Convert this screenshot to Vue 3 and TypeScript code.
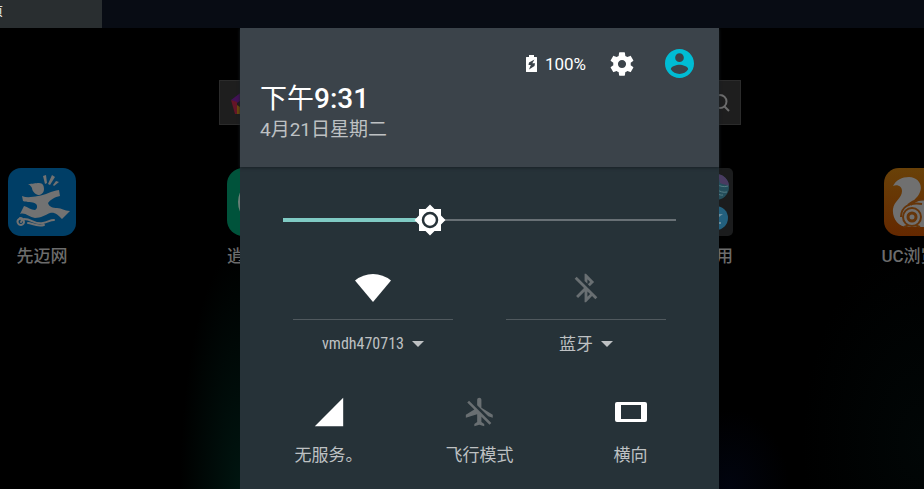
<script setup lang="ts">
import { computed, ref } from 'vue'

interface App {
  id: string
  name: string
}

const apps: App[] = [
  { id: 'xianmai', name: '先迈网' },
  { id: 'market', name: '逍遥市场' },
  { id: 'blank', name: '' },
  { id: 'folder', name: '系统应用' },
  { id: 'uc', name: 'UC浏览器' },
]

const brightness = ref(375)
const level = computed(() => `${brightness.value / 10}%`)
</script>

<template>
  <div class="window">
    <nav class="tabs"><a class="tab" href="#"><span>首页</span></a></nav>

    <main class="screen">
      <div class="device">
        <div class="search">
          <svg class="logo" viewBox="0 0 24 24" aria-hidden="true">
            <path d="M0 9 12 0v8L6 12z" fill="#421156" />
            <path d="m12 0 12 9-6 3-6-4z" fill="#173d66" />
            <path d="m0 9 6 2v12H4z" fill="#641527" />
            <path d="m6 14 6 4v5H6z" fill="#6b4a0c" />
            <path d="M24 9 20 23h-8v-5l6-6z" fill="#14533a" />
          </svg>
          <svg class="glass" viewBox="0 0 20 20" aria-hidden="true">
            <circle cx="9" cy="8.500" r="6.500" />
            <path d="m13.500 13.500 4.500 4.500" />
          </svg>
        </div>

        <div class="apps">
          <a v-for="app in apps" :key="app.id" class="app" href="#">
            <svg v-if="app.id === 'xianmai'" class="app-icon" viewBox="0 0 68 68" aria-hidden="true">
              <rect width="68" height="68" rx="13" fill="#003e66" />
              <g fill="#727272">
                <path d="M20 16c5 0 7-1 11-1 4 0 5 3 5 6 0 4-3 6-6 6-3-1-6-4-6-7-1-2-2-3-4-4z" />
                <path d="M14 28c5 2 10 1 16 0 8-1 13-5 21-6l1 6c-5 1-10 4-12 7 1 4 5 5 9 5 5 0 7 3 13 3l-8 8c-4-4-7-7-12-6-5 2-9 5-15 5-6-1-10-6-15-4l4-8c4 1 7 4 11 4 2-1 3-4 1-6-4-3-9-1-13-3z" />
                <path d="M35 8l3-1 1 8-2 1zM44 7l3 2-5 8-2-1zM48 13l3 1-5 4-1-1z" />
              </g>
              <g fill="none" stroke="#727272" stroke-width="2" stroke-linecap="round">
                <path d="M13 54c2-2 0-4-2-3-3 2-1 6 2 6 5-1 3-7-1-7" />
                <path d="M16 51c8 0 11 6 19 4 5-1 7-3 11-3" />
                <path d="M20 55c4 0 8 4 16 2" />
              </g>
            </svg>
            <svg v-else-if="app.id === 'market'" class="app-icon" viewBox="0 0 68 68" aria-hidden="true">
              <rect width="68" height="68" rx="16" fill="#00533b" />
              <circle cx="34" cy="34" r="19" fill="none" stroke="#687e76" stroke-width="8" />
            </svg>
            <svg v-else-if="app.id === 'folder'" class="app-icon" viewBox="0 0 68 68" aria-hidden="true">
              <rect width="68" height="68" rx="5" fill="#1b1c1d" />
              <circle cx="20" cy="19" r="13" fill="#275066" />
              <circle cx="51" cy="19" r="13" fill="#244e5b" />
              <path d="M53 6a13 13 0 0 1 11 12c-3-2-6-1-9-3z" fill="#493b61" />
              <path d="M42 17c8-5 12 4 21 1M42 22c8-5 12 4 20 2M46 27c5-4 8 1 12 0" fill="none" stroke="#557b83" />
              <circle cx="20" cy="50" r="12" fill="#275066" />
              <circle cx="51" cy="50" r="12" fill="#23607e" />
              <path d="M48 47h7l-4 3M49 55h7" fill="none" stroke="#6a8d9c" stroke-width="2" />
            </svg>
            <svg v-else-if="app.id === 'uc'" class="app-icon" viewBox="0 0 68 68" aria-hidden="true">
              <defs>
                <linearGradient id="amber" x2="0" y2="1">
                  <stop stop-color="#694108" />
                  <stop offset="1" stop-color="#642800" />
                </linearGradient>
              </defs>
              <rect width="68" height="68" rx="15" fill="url(#amber)" />
              <path d="M9 18C12 12 18 9 25 9c9 0 14 8 11 15-2 6-8 8-9 14 5-6 15-8 31-8v29H24C14 59 8 50 9 41c1-8 9-11 9-18 0-5-5-7-9-5z" fill="#707070" />
              <g fill="none" stroke="#65350a" stroke-width="2">
                <path d="M17 49c0-10 8-15 21-13M24 37c6-6 14-6 27-5" />
                <path d="M20 59q8-4 16 0" />
              </g>
              <circle cx="28" cy="49" r="9" fill="#707070" stroke="#65350a" stroke-width="2" />
              <circle cx="28" cy="49" r="4" fill="#707070" stroke="#65350a" stroke-width="3" />
            </svg>
            <span v-else class="app-icon"></span>
            <span class="app-name">{{ app.name }}</span>
          </a>
        </div>

        <section class="panel">
          <header class="head">
            <div class="status">
              <svg class="battery" viewBox="0 0 11 17" aria-hidden="true">
                <path fill="#fff" fill-rule="evenodd" d="M3 0h5v2h2.500q.5 0 .5.5v14q0 .5-.5.5H.5q-.5 0-.5-.5v-14Q0 2 .5 2H3zM8.500 4.500 3 7.500 2.500 10h2.300L3 14.500 8.500 11 9 8.300H6.300z" />
              </svg>
              <span class="percent">100%</span>
              <button class="settings" type="button" aria-label="设置">
                <svg viewBox="0 0 24 24" aria-hidden="true">
                  <path fill="#fff" d="M19.43 12.98c.04-.32.07-.64.07-.98s-.03-.66-.07-.98l2.110-1.650c.19-.15.24-.42.12-.64l-2-3.460c-.12-.22-.39-.3-.61-.22l-2.490 1c-.52-.4-1.080-.73-1.690-.98l-.38-2.650C14.460 2.180 14.250 2 14 2h-4c-.25 0-.46.18-.49.42l-.38 2.650c-.61.25-1.170.59-1.690.98l-2.490-1c-.23-.09-.49 0-.61.22l-2 3.460c-.13.22-.07.49.12.64l2.110 1.650c-.04.32-.07.65-.07.98s.03.66.07.98l-2.110 1.650c-.19.15-.24.42-.12.64l2 3.460c.12.22.39.3.61.22l2.490-1c.52.4 1.080.73 1.690.98l.38 2.650c.03.24.24.42.49.42h4c.25 0 .46-.18.49-.42l.38-2.650c.61-.25 1.170-.59 1.690-.98l2.490 1c.23.09.49 0 .61-.22l2-3.460c.12-.22.07-.49-.12-.64l-2.110-1.650zM12 15.500c-1.930 0-3.500-1.570-3.500-3.500s1.570-3.500 3.500-3.500 3.500 1.570 3.500 3.500-1.570 3.500-3.500 3.500z" />
                </svg>
              </button>
              <button class="user" type="button" aria-label="用户">
                <svg viewBox="2 2 20 20" aria-hidden="true">
                  <path fill="#00bcd4" d="M12 2C6.480 2 2 6.480 2 12s4.480 10 10 10 10-4.480 10-10S17.520 2 12 2zm0 3c1.660 0 3 1.340 3 3s-1.340 3-3 3-3-1.340-3-3 1.340-3 3-3zm0 14.200c-2.500 0-4.710-1.280-6-3.220.03-1.990 4-3.080 6-3.080 1.990 0 5.970 1.090 6 3.080-1.290 1.940-3.500 3.220-6 3.220z" />
                </svg>
              </button>
            </div>
            <div class="clock">下午<b>9:31</b></div>
            <div class="date">4月21日星期二</div>
          </header>

          <div class="body">
            <div class="slider">
              <div class="fill" :style="{ width: level }"></div>
              <svg class="sun" :style="{ left: level }" viewBox="-15 -15 30 30" aria-hidden="true">
                <path fill="#fff" d="M0-15.500 4.500-11H11v6.500L15.500 0 11 4.500V11H4.500L0 15.500-4.500 11H-11V4.500L-15.500 0-11-4.500V-11h6.500z" />
                <circle r="7" fill="#fff" stroke="#263238" stroke-width="2.500" />
              </svg>
              <input v-model.number="brightness" type="range" min="0" max="1000" aria-label="亮度" />
            </div>

            <div class="wide-tiles">
              <div class="wide-tile">
                <button class="toggle" type="button" aria-label="WLAN">
                  <svg class="wifi" viewBox="0 0 36 28" aria-hidden="true">
                    <path fill="#fff" d="M18 28 0 6.500Q8 0 18 0t18 6.500z" />
                  </svg>
                </button>
                <button class="detail" type="button">
                  <span class="network">vmdh470713</span><i class="caret"></i>
                </button>
              </div>
              <div class="wide-tile">
                <button class="toggle" type="button" aria-label="蓝牙开关">
                  <svg class="glyph" viewBox="0 0 24 24" aria-hidden="true">
                    <path fill="#696f72" d="M13 5.830l1.880 1.880-1.600 1.600 1.410 1.410 3.020-3.020L12 2h-1v5.030l2 2v-3.200zM5.410 4L4 5.410 10.590 12 5 17.590 6.410 19 11 14.410V22h1l4.290-4.290 2.300 2.290L20 18.590 5.410 4zM13 18.170v-3.760l1.880 1.880L13 18.170z" />
                  </svg>
                </button>
                <button class="detail" type="button">
                  <span>蓝牙</span><i class="caret"></i>
                </button>
              </div>
            </div>

            <div class="tiles">
              <button class="tile" type="button">
                <svg class="glyph" viewBox="0 0 24 24" aria-hidden="true"><path fill="#fff" d="M2 22h20V2z" /></svg>
                <span>无服务。</span>
              </button>
              <button class="tile" type="button">
                <svg class="glyph" viewBox="0 0 24 24" aria-hidden="true">
                  <path fill="#696f72" d="M13 9V3.500c0-.83-.67-1.500-1.500-1.500S10 2.670 10 3.500v3.680l7.830 7.830L21 16v-2l-8-5zM3 5.270l4.990 4.990L2 14v2l8-2.500V19l-2 1.500V22l3.500-1 3.500 1v-1.500L13 19v-3.730L18.730 21 20 19.730 4.270 4 3 5.270z" />
                </svg>
                <span>飞行模式</span>
              </button>
              <button class="tile" type="button">
                <svg class="glyph" viewBox="0 0 34 34" aria-hidden="true">
                  <path fill="#fff" fill-rule="evenodd" d="M3 7h28q2 0 2 2v16q0 2-2 2H3q-2 0-2-2V9q0-2 2-2zm4 3v14h20V10z" />
                </svg>
                <span>横向</span>
              </button>
            </div>
          </div>
        </section>
      </div>
    </main>
  </div>
</template>

<style>
body {
  margin: 0;
  background: #000;
}
</style>

<style scoped>
.window {
  display: flex;
  flex-direction: column;
  height: 100vh;
  overflow: hidden;
  font-family: Roboto, "Noto Sans CJK SC", sans-serif;
}
.tabs {
  display: flex;
  flex: none;
  height: 28px;
  background: #080c14;
}
.tab {
  display: flex;
  align-items: center;
  width: 102px;
  padding-bottom: 4px;
  box-sizing: border-box;
  overflow: hidden;
  background: #292e30;
  color: #fff;
  font-size: 12px;
  line-height: 16px;
  text-decoration: none;
}
.tab span {
  margin-left: -21px;
}
.screen {
  flex: 1;
  min-height: 0;
  overflow: hidden;
}
.device {
  position: relative;
  width: calc(100% + 36px);
  height: 100%;
  padding-top: 52px;
  box-sizing: border-box;
  background:
    radial-gradient(ellipse 60px 240px at 25% 100%, #001510, transparent),
    radial-gradient(ellipse 60px 80px at 76% 100%, #01040f, transparent),
    radial-gradient(ellipse 120px 200px at 96% 90%, #010606, transparent),
    #000;
}
.search {
  display: flex;
  align-items: center;
  justify-content: space-between;
  width: 522px;
  height: 45px;
  margin: 0 auto;
  padding: 0 9px 0 11px;
  box-sizing: border-box;
  border: 1px solid #2b2b2b;
  background: #1e1e1e;
}
.logo {
  width: 24px;
  height: 24px;
}
.glass {
  width: 20px;
  height: 20px;
  fill: none;
  stroke: #6c6c6c;
  stroke-width: 2;
}
.apps {
  display: flex;
  justify-content: space-between;
  padding: 43px 8px 0;
}
.app {
  display: flex;
  flex-direction: column;
  align-items: center;
  gap: 8px;
  width: 68px;
  color: #6c6c6c;
  text-decoration: none;
}
.app-icon {
  width: 68px;
  height: 68px;
}
.app-name {
  font-size: 17px;
  font-weight: 500;
  line-height: 24px;
  white-space: nowrap;
}
.panel {
  position: absolute;
  top: 0;
  bottom: 0;
  left: 25%;
  display: flex;
  flex-direction: column;
  width: 479px;
  background: #263238;
  color: #bec1c3;
}
.head {
  height: 139px;
  padding: 17px 25px 0 20px;
  box-sizing: border-box;
  background: #3b434a;
  box-shadow: 0 1px 3px #182126;
}
.status {
  display: flex;
  align-items: center;
  justify-content: flex-end;
  height: 37px;
  color: #fff;
}
.battery {
  width: 11px;
  height: 17px;
  margin-right: 8px;
}
.percent {
  font-size: 17px;
  line-height: 20px;
}
button {
  padding: 0;
  border: 0;
  background: none;
  color: inherit;
  font: inherit;
}
.settings,
.user {
  display: flex;
}
.settings {
  margin: 0 29px 0 22px;
}
.settings svg {
  width: 28px;
  height: 28px;
}
.user svg {
  width: 29px;
  height: 29px;
}
.clock {
  color: #fff;
  font-size: 27px;
  line-height: 34px;
}
.clock b {
  font-size: 28px;
  font-weight: 500;
}
.date {
  font-size: 19px;
  line-height: 28px;
}
.body {
  display: flex;
  flex-direction: column;
}
.slider {
  position: relative;
  display: flex;
  align-items: center;
  height: 36px;
  margin: 35px 43px 0;
  background: linear-gradient(#687075, #687075) center / 100% 2px no-repeat;
}
.fill {
  height: 4px;
  background: #80cbc4;
}
.sun {
  position: absolute;
  width: 30px;
  height: 30px;
  margin-left: -15px;
  overflow: visible;
}
.slider input {
  position: absolute;
  width: 100%;
  height: 36px;
  margin: 0;
  opacity: 0;
}
.wide-tiles {
  display: grid;
  grid-template-columns: 1fr 1fr;
  gap: 53px;
  padding: 30px 53px 0;
}
.toggle {
  display: flex;
  align-items: center;
  justify-content: center;
  width: 100%;
  height: 52px;
  padding-bottom: 11px;
  border-bottom: 1px solid #50595e;
}
.wifi {
  width: 36px;
  height: 28px;
}
.glyph {
  width: 34px;
  height: 34px;
}
.detail {
  display: flex;
  align-items: center;
  justify-content: center;
  gap: 8px;
  width: 100%;
  padding-top: 12px;
  font-size: 17px;
  line-height: 24px;
}
.network {
  font-family: "Roboto Condensed", Roboto, sans-serif;
  font-size: 16px;
}
.caret {
  border: 6px solid transparent;
  border-top-color: #bec1c3;
  border-bottom: 0;
}
.tiles {
  display: grid;
  grid-template-columns: repeat(3, 1fr);
  padding: 39px 13px 0;
}
.tile {
  display: flex;
  flex-direction: column;
  align-items: center;
  gap: 14px;
  font-size: 17px;
  line-height: 24px;
}
</style>
